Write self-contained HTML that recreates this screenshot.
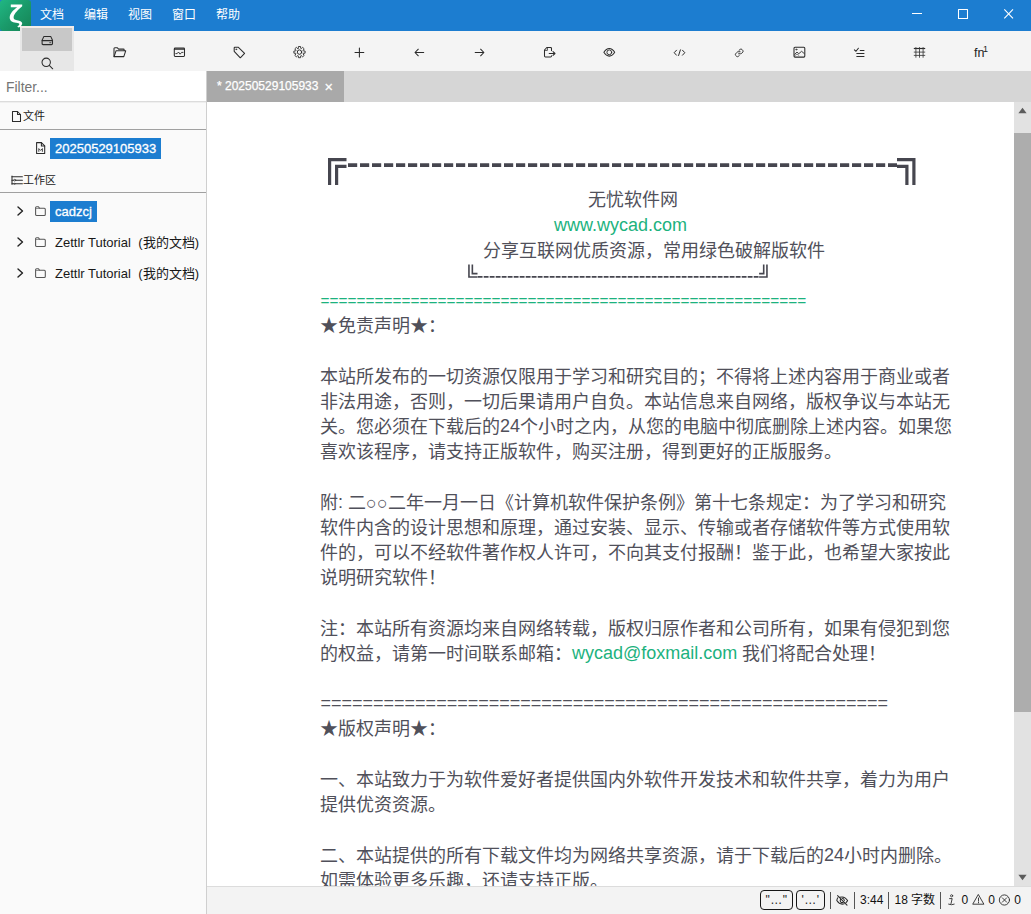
<!DOCTYPE html>
<html lang="zh-CN">
<head>
<meta charset="utf-8">
<title>Zettlr</title>
<style>
*{box-sizing:border-box;margin:0;padding:0}
html,body{width:1031px;height:914px;overflow:hidden;background:#fff}
body{font-family:"Liberation Sans",sans-serif;position:relative;color:#333;font-size:13px}
.abs{position:absolute}
#titlebar{left:0;top:0;width:1031px;height:31px;background:#1c7dd0}
#logo{left:0;top:0;width:31px;height:31px;border-radius:3px;background:linear-gradient(135deg,#20b783 0%,#1a9a6a 50%,#168455 100%)}
.menu{top:1px;height:30px;line-height:29px;color:#fff;font-size:12px;white-space:nowrap}
#toolbar{left:0;top:31px;width:1031px;height:40px;background:#f4f4f4}
#toggle{left:20px;top:26px;width:54px;height:45px;background:#e7e7e7;border-top:2px solid #f3ece8}
#toggle .sel{position:absolute;left:2px;top:0;width:50px;height:23px;background:#c8c8c8}
.ico{position:absolute;overflow:visible}
.ico *{fill:none;stroke:#2b2b2b;stroke-width:1.05;stroke-linecap:round;stroke-linejoin:round}
#sidebar{left:0;top:71px;width:206px;height:843px;background:#fafafa}
#sideborder{left:206px;top:71px;width:1px;height:843px;background:#cfcfcf}
#filter{left:0;top:71px;width:206px;height:31px;background:#fff;border-bottom:1px solid #dcdcdc;box-shadow:0 1px 0 #efefef;color:#757575;font-size:13.9px;line-height:32px;padding-left:6px}
.shead{left:0;width:206px;height:27px;border-bottom:1px solid #a0a0a0;font-size:12px;color:#222;white-space:nowrap}
.item{font-size:13px;white-space:nowrap;color:#181818;height:21px;line-height:21px}
.selbg{background:#1c7dd0;color:#fff;padding:0 5px;-webkit-text-stroke:0.3px #fff}
#tabbar{left:207px;top:71px;width:824px;height:31px;background:#d6d6d6}
#tab{left:207px;top:71px;width:137px;height:31px;background:#a9a9a9;color:#fff;font-size:12px;line-height:30px;white-space:nowrap;-webkit-text-stroke:0.25px #fff}
#editor{left:207px;top:102px;width:807px;height:784px;background:#fff;overflow:hidden}
#scroll{left:1014px;top:102px;width:17px;height:784px;background:#e2e2e2}
#thumb{left:1014px;top:133px;width:17px;height:579px;background:#adadad}
#status{left:207px;top:886px;width:824px;height:28px;background:#f3f3f3;border-top:1px solid #dcdcdc}
.sbtn{height:20px;border:1px solid #161616;border-radius:4px;font-size:12px;line-height:19px;text-align:center;color:#222;white-space:nowrap;letter-spacing:0.5px}
.ssep{top:892px;width:1px;height:16.5px;background:#555}
.stxt{top:892px;font-size:12px;line-height:16px;color:#111;white-space:nowrap}
.ln{position:absolute;left:114px;white-space:nowrap;font-size:18px;line-height:25px;height:25px;color:#50505a;margin-top:1px;margin-left:-1px}
.g{color:#1cb27e}
.l{position:relative;top:-1px}
.e{margin-left:0.5px}
</style>
</head>
<body>
<div id="titlebar" class="abs"></div>
<div id="logo" class="abs"></div>
<div class="abs menu" style="left:40px">文档</div>
<div class="abs menu" style="left:84px">编辑</div>
<div class="abs menu" style="left:128px">视图</div>
<div class="abs menu" style="left:172px">窗口</div>
<div class="abs menu" style="left:216px">帮助</div>
<div id="toolbar" class="abs"></div>
<div id="toggle" class="abs"><div class="sel"></div></div>
<div id="sidebar" class="abs"></div>
<div id="sideborder" class="abs"></div>
<div id="filter" class="abs">Filter...</div>
<div id="tabbar" class="abs"></div>
<div id="tab" class="abs"><span style="position:absolute;left:10px">* 20250529105933</span><span style="position:absolute;left:117.4px;font-size:14.5px;top:1px">×</span></div>
<div id="editor" class="abs">
<svg class="abs" style="left:114px;top:50px" width="600" height="40" viewBox="321 152 600 40">
<g fill="none" stroke="#46464f" stroke-width="3.2">
<path d="M329.6 185V159.6H346.5"/><path d="M336.6 185V166.3H346.5"/>
<path d="M897 159.6H913.9V185"/><path d="M897 166.3H906.9V185"/>
</g>
<path d="M348 165.1H897" stroke="#46464f" stroke-width="3.8" stroke-dasharray="9.2 2.8" fill="none"/>
</svg>
<div class="ln" style="left:382px;top:84.5px;">无忧软件网</div>
<div class="ln" style="left:348px;top:110.5px;"><span class="g l">www.wycad.com</span></div>
<div class="ln" style="left:277px;top:135.5px;">分享互联网优质资源，常用绿色破解版软件</div>
<svg class="abs" style="left:254px;top:158px" width="320" height="24" viewBox="461 260 320 24">
<g fill="none" stroke="#46464f" stroke-width="1.6">
<path d="M468.95 264.4V276.95H477.5"/><path d="M472.35 264.4V273.65H477.5"/>
<path d="M766.95 264.4V276.95H759.1"/><path d="M763.7 264.4V273.65H759.1"/>
</g>
<path d="M477.7 276.95H759.2" stroke="#46464f" stroke-width="1.7" stroke-dasharray="4.85 1.15" fill="none"/>
</svg>
<div class="ln" style="left:114px;top:185.5px;"><span class="g e" style="font-size:15.41px;position:relative;top:-1px">======================================================</span></div>
<div class="ln" style="left:114px;top:210.5px;">★免责声明★：</div>
<div class="ln" style="left:114px;top:261.5px;">本站所发布的一切资源仅限用于学习和研究目的；不得将上述内容用于商业或者</div>
<div class="ln" style="left:114px;top:286.5px;">非法用途，否则，一切后果请用户自负。本站信息来自网络，版权争议与本站无</div>
<div class="ln" style="left:114px;top:311.5px;">关。您必须在下载后的<span class="l">24</span>个小时之内，从您的电脑中彻底删除上述内容。如果您</div>
<div class="ln" style="left:114px;top:336.5px;">喜欢该程序，请支持正版软件，购买注册，得到更好的正版服务。</div>
<div class="ln" style="left:114px;top:387.5px;">附<span class="l">: </span>二○○二年一月一日《计算机软件保护条例》第十七条规定：为了学习和研究</div>
<div class="ln" style="left:114px;top:412.5px;">软件内含的设计思想和原理，通过安装、显示、传输或者存储软件等方式使用软</div>
<div class="ln" style="left:114px;top:437.5px;">件的，可以不经软件著作权人许可，不向其支付报酬！鉴于此，也希望大家按此</div>
<div class="ln" style="left:114px;top:462.5px;">说明研究软件！</div>
<div class="ln" style="left:114px;top:513.5px;">注：本站所有资源均来自网络转载，版权归原作者和公司所有，如果有侵犯到您</div>
<div class="ln" style="left:114px;top:538.5px;">的权益，请第一时间联系邮箱：<span class="g l">wycad@foxmail.com</span> 我们将配合处理！</div>
<div class="ln" style="left:114px;top:588.5px;"><span class="l e">======================================================</span></div>
<div class="ln" style="left:114px;top:613.5px;">★版权声明★：</div>
<div class="ln" style="left:114px;top:664.5px;">一、本站致力于为软件爱好者提供国内外软件开发技术和软件共享，着力为用户</div>
<div class="ln" style="left:114px;top:689.5px;">提供优资资源。</div>
<div class="ln" style="left:114px;top:740.5px;">二、本站提供的所有下载文件均为网络共享资源，请于下载后的<span class="l">24</span>小时内删除。</div>
<div class="ln" style="left:114px;top:765.5px;">如需体验更多乐趣，还请支持正版。</div>
<!--EDITOR-END-->
</div>
<div id="scroll" class="abs"></div>
<div id="thumb" class="abs"></div>
<div id="status" class="abs"></div>

<div class="abs shead" style="top:102px;height:28px"></div>
<svg class="ico" style="left:12px;top:111px" width="9" height="11" viewBox="0 0 9 11"><path d="M0.5 0.5H5.5L8.5 3.5V10.5H0.5Z"/><path d="M5.5 0.5V3.5H8.5"/></svg>
<div class="abs" style="left:23px;top:108px;font-size:11px;line-height:16px;color:#222;white-space:nowrap">文件</div>
<svg class="ico" style="left:36px;top:142px" width="10" height="12" viewBox="0 0 10 12"><path d="M0.6 0.6H5.4L8.7 3.9V11.4H0.6Z"/><path d="M5.4 0.6V3.9H8.7"/><path d="M2.8 9.4V6.6L4.6 8.4L6.4 6.6V9.4" style="stroke-width:0.85"/></svg>
<div class="abs item selbg" style="left:50px;top:138px;width:111px">20250529105933</div>
<div class="abs shead" style="top:165px;height:28px"></div>
<svg class="ico" style="left:11px;top:175px" width="13" height="11" viewBox="-0 -0.4 13 11"><path d="M1 0.6V8.9"/><path d="M1 1.3H11.4M1 4.8H11.4M1 8.4H11.4"/><circle cx="3.8" cy="4.8" r="0.9" style="fill:#fafafa;stroke-width:0.7"/><circle cx="3.4" cy="8.4" r="0.6" style="fill:#fafafa;stroke-width:0.6"/></svg>
<div class="abs" style="left:23px;top:172px;font-size:11px;line-height:16px;color:#222;white-space:nowrap">工作区</div>
<svg class="ico" style="left:17px;top:206px" width="7" height="10" viewBox="0 0 7 10"><path d="M1 1L5.5 5L1 9" style="stroke:#222;stroke-width:1.4"/></svg>
<svg class="ico" style="left:35px;top:206px" width="11" height="10" viewBox="0 0 11 10"><path d="M0.6 2Q0.6 0.8 1.6 0.8H3.5L4.7 2.3H9.3Q10.3 2.3 10.3 3.3V8.5Q10.3 9.5 9.3 9.5H1.6Q0.6 9.5 0.6 8.5Z" style="stroke:#555"/><path d="M0.8 2.5H4.6" style="stroke:#666;stroke-width:0.7"/></svg>
<div class="abs item selbg" style="left:50px;top:201px;width:47px">cadzcj</div>
<svg class="ico" style="left:17px;top:237px" width="7" height="10" viewBox="0 0 7 10"><path d="M1 1L5.5 5L1 9" style="stroke:#222;stroke-width:1.4"/></svg>
<svg class="ico" style="left:35px;top:237px" width="11" height="10" viewBox="0 0 11 10"><path d="M0.6 2Q0.6 0.8 1.6 0.8H3.5L4.7 2.3H9.3Q10.3 2.3 10.3 3.3V8.5Q10.3 9.5 9.3 9.5H1.6Q0.6 9.5 0.6 8.5Z" style="stroke:#555"/><path d="M0.8 2.5H4.6" style="stroke:#666;stroke-width:0.7"/></svg>
<div class="abs item" style="left:55px;top:232px">Zettlr Tutorial<span style="margin-left:7.5px">(我的文档)</span></div>
<svg class="ico" style="left:17px;top:268px" width="7" height="10" viewBox="0 0 7 10"><path d="M1 1L5.5 5L1 9" style="stroke:#222;stroke-width:1.4"/></svg>
<svg class="ico" style="left:35px;top:268px" width="11" height="10" viewBox="0 0 11 10"><path d="M0.6 2Q0.6 0.8 1.6 0.8H3.5L4.7 2.3H9.3Q10.3 2.3 10.3 3.3V8.5Q10.3 9.5 9.3 9.5H1.6Q0.6 9.5 0.6 8.5Z" style="stroke:#555"/><path d="M0.8 2.5H4.6" style="stroke:#666;stroke-width:0.7"/></svg>
<div class="abs item" style="left:55px;top:263px">Zettlr Tutorial<span style="margin-left:7.5px">(我的文档)</span></div>
<!--SIDEBAR-END-->
<svg class="ico" style="left:0;top:0" width="31" height="31" viewBox="0 0 31 31"><path d="M10.8 4.4H22.2V6.2C18.5 9.5 14.2 13 13.6 17C13.4 19 14.5 19.8 17 20.2C20.5 20.6 22.3 21.8 22.2 23.6C22 25.5 20.5 27 18.6 27.6L17.2 26.6C18.6 25.8 19.4 24.8 19.3 24C19.2 23.2 18 22.9 16 22.7C12 22.3 9.7 20.6 9.7 17.4C9.8 13.5 13.5 10 17.2 7.3H10.8Z" style="fill:#fff;stroke:none"/></svg>
<svg class="ico" style="left:911px;top:8px" width="104" height="12" viewBox="911 8 104 12"><path d="M912 13.5H922" style="stroke:#fff;stroke-linecap:butt"/><path d="M958.5 9.5H967.5V18.5H958.5Z" style="stroke:#fff"/><path d="M1004.3 9.4L1013 18.4M1013 9.4L1004.3 18.4" style="stroke:#fff;stroke-width:1.1;stroke-linecap:butt"/></svg>
<svg class="ico" style="left:41px;top:35px" width="13" height="11" viewBox="-0.3 -0.6 13 11"><path d="M2.6 0.8H9.4L11.2 4.6V8Q11.2 9 10.2 9H1.8Q0.8 9 0.8 8V4.6Z"/><path d="M0.9 5H11.1"/><path d="M8.4 7.1H9.6" style="stroke-width:0.8"/></svg>
<svg class="ico" style="left:41px;top:57px" width="13" height="13" viewBox="-0.3 -0.4 13 13"><circle cx="4.9" cy="4.9" r="4.2"/><path d="M8 8L11.4 11.4"/></svg>
<svg class="ico" style="left:113px;top:47px" width="14" height="11" viewBox="-0.4 -0.2 14 11"><path d="M0.6 9.4V1.4Q0.6 0.6 1.4 0.6H4L5.2 1.9H10Q10.8 1.9 10.8 2.7V3.4"/><path d="M0.7 9.4L2.6 3.6H12.3L10.4 9.4Z"/></svg>
<svg class="ico" style="left:173px;top:47px" width="13" height="11" viewBox="-0.4 -0.2 13 11"><rect x="0.9" y="0.9" width="10.2" height="8.4" rx="0.9"/><path d="M1 2H11" style="stroke-width:1.1"/><path d="M2.4 6.4H3.8L5.1 4.8L6.7 7L8.2 5.2H9.6" style="stroke-width:0.9"/></svg>
<svg class="ico" style="left:233px;top:46px" width="13" height="13" viewBox="-0.3 -0.7 13 13"><path d="M0.9 1.3Q0.9 0.6 1.6 0.6H5.1L11.3 6.7L7 11.1L0.9 4.6Z"/><circle cx="2.9" cy="2.6" r="0.5" style="stroke-width:0.7"/></svg>
<svg class="ico" style="left:293px;top:46px" width="13" height="13" viewBox="-0.5 -0.1 13 13"><path d="M4.82 2.18L4.92 0.40L7.08 0.40L7.18 2.18L7.87 2.46L9.20 1.28L10.72 2.80L9.54 4.13L9.82 4.82L11.60 4.92L11.60 7.08L9.82 7.18L9.54 7.87L10.72 9.20L9.20 10.72L7.87 9.54L7.18 9.82L7.08 11.60L4.92 11.60L4.82 9.82L4.13 9.54L2.80 10.72L1.28 9.20L2.46 7.87L2.18 7.18L0.40 7.08L0.40 4.92L2.18 4.82L2.46 4.13L1.28 2.80L2.80 1.28L4.13 2.46Z" style="stroke-width:0.9;stroke-linejoin:round"/><circle cx="6" cy="6" r="2.2" style="stroke-width:1"/></svg>
<svg class="ico" style="left:354px;top:47px" width="11" height="11" viewBox="-0.4 -0.5 11 11"><path d="M5 0.6V9.4M0.6 5H9.4"/></svg>
<svg class="ico" style="left:414px;top:48px" width="11" height="9" viewBox="-0.3 -0.5 11 9"><path d="M0.8 4H9.4M4 0.7L0.7 4L4 7.3"/></svg>
<svg class="ico" style="left:474px;top:48px" width="11" height="9" viewBox="-0.6 -0.5 11 9"><path d="M0.6 4H9.2M6 0.7L9.3 4L6 7.3"/></svg>
<svg class="ico" style="left:543px;top:46px" width="13" height="12" viewBox="543 46 13 12"><path d="M551.5 50.6V48.4Q551.5 47.5 550.6 47.5H546.8L544.5 50V56.1Q544.5 57 545.4 57H550.6Q551.5 57 551.5 56.1V55.8"/><path d="M544.7 50.4H547.4V47.7" style="stroke-width:0.8"/><path d="M549.2 53.5H554.8M553 51.6L555 53.5L553 55.4"/></svg>
<svg class="ico" style="left:603px;top:47px" width="13" height="10" viewBox="-0.3 -0.8 13 10"><path d="M0.6 4.5C2.4 1.6 4.2 0.7 6 0.7C7.8 0.7 9.6 1.6 11.4 4.5C9.6 7.4 7.8 8.3 6 8.3C4.2 8.3 2.4 7.4 0.6 4.5Z"/><circle cx="6" cy="4.5" r="2.4" style="stroke-width:0.95"/></svg>
<svg class="ico" style="left:673px;top:49px" width="13" height="8" viewBox="-0.5 -0.2 13 8"><path d="M3 1L0.7 3.5L3 6M9 1L11.3 3.5L9 6M6.9 0.7L5.1 6.3" style="stroke-width:1"/></svg>
<svg class="ico" style="left:734px;top:47px" width="11" height="11" viewBox="-0.5 -0.4 11 11"><g transform="translate(0.2 0.9) scale(0.91)"><path d="M4.3 6H6.4Q7.4 6 8.1 5.1L9 4Q9.7 3 8.8 2.2L7.9 1.2Q7 0.4 6.1 1.1L4.7 2.3"/><path d="M5.9 3.8H3.9Q2.9 3.8 2.2 4.7L1 6.1Q0.3 7.1 1.1 7.9L2.1 8.9Q3 9.6 3.9 8.9L5 8"/></g></svg>
<svg class="ico" style="left:793px;top:46px" width="13" height="12" viewBox="-0.4 -0.7 13 12"><rect x="0.6" y="0.6" width="10.8" height="9.8" rx="1"/><circle cx="2.9" cy="2.8" r="0.6" style="stroke-width:0.7"/><path d="M1.2 7.6L3.6 5.4L5.4 7L8.2 4.6L10.8 6.8" style="stroke-width:0.9"/><path d="M1.2 9L3.6 7.4L5.4 8.6" style="stroke-width:0.6"/></svg>
<svg class="ico" style="left:853px;top:47px" width="12" height="11" viewBox="-0.8 -0.5 12 11"><path d="M0.6 2.3L2.2 3.8L4.6 0.7"/><path d="M6 3H10.6M2.6 6H10.6M2.6 9H10.6" style="stroke-linecap:butt;stroke-width:1"/></svg>
<svg class="ico" style="left:913px;top:46px" width="13" height="12" viewBox="-0.5 -0.8 13 12"><path d="M0.3 1.7H11.7" style="stroke-linecap:butt;stroke-width:1.2"/><path d="M0.3 5.3H11.7M0.3 8.6H11.7M2.4 0.3V10.9M6 0.3V10.9M9.6 0.3V10.9" style="stroke-linecap:butt;stroke-width:0.85;stroke:#3a3a3a"/></svg>
<div class="abs" style="left:974px;top:45px;font-size:12.5px;line-height:16px;color:#222;white-space:nowrap">fn<span style="font-size:9px;position:relative;top:-5px;left:-1.5px">1</span></div>
<!--ICONS-END-->

<div class="abs sbtn" style="left:760px;top:890px;width:33px">"…"</div>
<div class="abs sbtn" style="left:796px;top:890px;width:29px">'…'</div>
<div class="abs ssep" style="left:830px"></div>
<svg class="ico" style="left:836px;top:894px" width="13" height="13" viewBox="-0.2 -0.5 13 13"><path d="M1.6 3.2Q0.9 4.2 0.6 6Q3 9.6 6 9.6Q7 9.6 8 9.2"/><path d="M3.4 2.8Q4.6 2.4 6 2.4Q9 2.4 11.4 6Q10.8 7.2 9.8 8.2"/><path d="M4.4 4.6Q3.6 6 4.4 7.4Q5.6 8.6 7 7.8"/><path d="M6 3.8Q7.8 4 8.2 6"/><path d="M1.4 1.2L10.8 10.6" style="stroke-width:1.1"/></svg>
<div class="abs ssep" style="left:854px"></div>
<div class="abs stxt" style="left:860px">3:44</div>
<div class="abs ssep" style="left:888px"></div>
<div class="abs stxt" style="left:894.5px">18 字数</div>
<div class="abs ssep" style="left:940px"></div>
<svg class="ico" style="left:947px;top:894px" width="9" height="12" viewBox="0 0 9 12"><circle cx="4.6" cy="1.8" r="1.1" style="stroke-width:0.8"/><path d="M2.6 4.6H5.2L4 9.6" style="stroke-width:0.9"/><path d="M1.6 10.2Q4.4 11.4 7.2 10.2" style="stroke-width:0.9"/></svg>
<div class="abs stxt" style="left:961.6px">0</div>
<svg class="ico" style="left:972px;top:894px" width="13" height="12" viewBox="-0.5 -0 13 12"><path d="M6 0.8L11.4 10.2H0.6Z" style="stroke-width:0.9"/><path d="M6 4V7.2M6 8.4V8.9" style="stroke-width:0.9"/></svg>
<div class="abs stxt" style="left:988.2px">0</div>
<svg class="ico" style="left:998px;top:894px" width="13" height="13" viewBox="-0.5 -0 13 13"><circle cx="5.9" cy="6" r="5.1" style="stroke-width:0.9"/><path d="M3.8 3.8L8.2 8.2M8.2 3.8L3.8 8.2" style="stroke-width:0.9"/></svg>
<div class="abs stxt" style="left:1014.2px">0</div>
<svg class="ico" style="left:1018px;top:107px" width="9" height="7" viewBox="0 0 9 7"><path d="M4.5 0.8L8.6 6.2H0.4Z" style="fill:#5c5c5c;stroke:none"/></svg>
<svg class="ico" style="left:1018px;top:874px" width="9" height="7" viewBox="0 0 9 7"><path d="M4.5 6.2L8.6 0.8H0.4Z" style="fill:#5c5c5c;stroke:none"/></svg>
<!--STATUS-END-->
</body>
</html>
